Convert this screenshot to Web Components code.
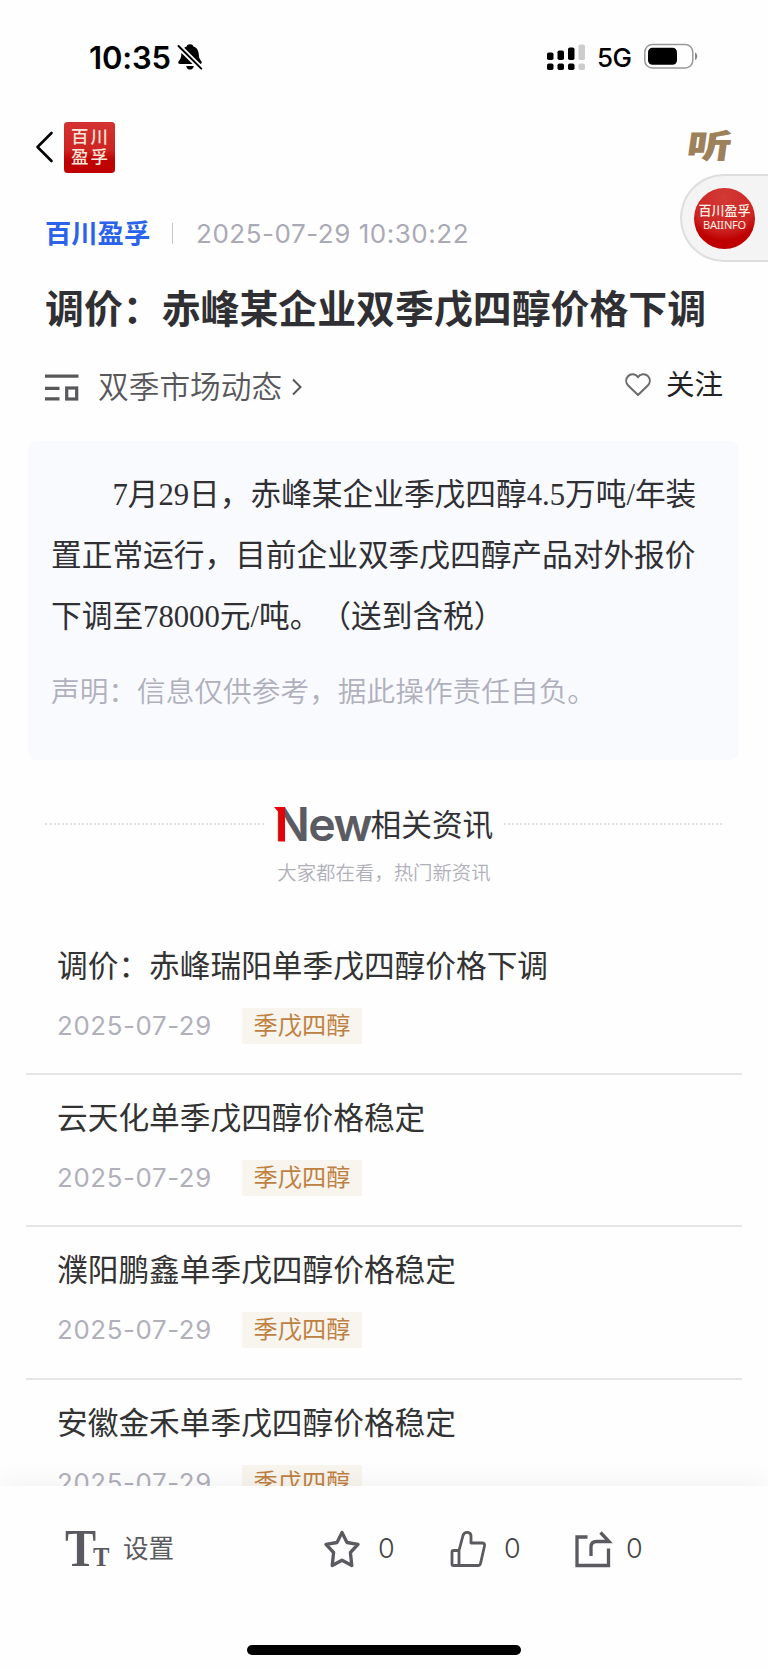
<!DOCTYPE html>
<html lang="zh-CN">
<head>
<meta charset="utf-8">
<title>百川盈孚</title>
<style>
  html, body { margin: 0; padding: 0; }
  body { background: #fefefe; width: 768px; height: 1669px; overflow: hidden;
    font-family: "Noto Sans CJK SC", sans-serif; text-spacing-trim: space-all; color: #333337; }
</style>
</head>
<body>
<app-page></app-page>
<script>
const define = (name, html) => {
  const t = document.createElement('template');
  t.innerHTML = html;
  customElements.define(name, class extends HTMLElement {
    constructor() {
      super();
      this.attachShadow({ mode: 'open' }).appendChild(t.content.cloneNode(true));
    }
  });
};

define('status-bar', `
<style>
  :host { display: flex; align-items: center; height: 114px; box-sizing: border-box; padding: 0 70px 0 89px; color: #000; font-family: Inter, sans-serif; }
  .time { font-size: 31px; font-weight: 600; line-height: 40px; letter-spacing: -.15px; width: 88px; white-space: nowrap; margin-top: 1px; }
  .gap { flex: 1; }
  .net { font-size: 26px; font-weight: 500; line-height: 40px; margin: 2px 12px 0 12px; width: 35px; letter-spacing: -.5px; white-space: nowrap; }
  svg { display: block; flex: none; }
</style>
<span class="time">10:35</span>
<svg width="26" height="28" viewBox="0 0 26 28"><path d="M13 1.200c1.800 0 3 .9 3.400 2.200 3.700 1.200 5.200 4.200 5.400 8.200.2 3.600 1 5 2.400 6.500 1 1 .7 2.900-.7 2.900H2.600c-1.500 0-1.800-1.900-.8-2.900 1.500-1.500 2.300-3 2.500-6.500.2-4 1.700-7 5.400-8.200C10 2.100 11.200 1.200 13 1.200Z"/><path d="M9.200 23h7.600c-.4 2.500-1.900 3.600-3.800 3.600S9.600 25.500 9.200 23Z"/><path d="M0 1.500 25 26.500" stroke="#fefefe" stroke-width="5.500"/><path d="M1.500 3 24.300 25.600" stroke="#000" stroke-width="2" stroke-linecap="round"/></svg>
<span class="gap"></span>
<svg width="39" height="28" viewBox="0 0 39 28"><g><rect x="1" y="9.500" width="6.500" height="7.500" rx="1.800"/><rect x="11.500" y="7.500" width="6.500" height="9.500" rx="1.800"/><rect x="22" y="4.500" width="6.500" height="12.500" rx="1.800"/><rect x="1" y="20.500" width="6.500" height="6.500" rx="1.800"/><rect x="11.500" y="20.500" width="6.500" height="6.500" rx="1.800"/><rect x="22" y="20.500" width="6.500" height="6.500" rx="1.800"/></g><g fill="#cdcdcd"><rect x="32.500" y="1.500" width="6.500" height="15.500" rx="1.800"/><rect x="32.500" y="20.500" width="6.500" height="6.500" rx="1.800"/></g></svg>
<span class="net">5G</span>
<svg width="54" height="28" viewBox="0 0 54 28"><rect x=".8" y="1.500" width="48" height="23.500" rx="7.500" fill="none" stroke="#999" stroke-width="1.500"/><rect x="4" y="4.800" width="29" height="17" rx="4.500"/><path d="M51 9.500c3 1.200 3 6.400 0 7.600Z" fill="#888"/></svg>
`);

define('brand-tile', `
<style>
  :host { display: grid; grid-template-columns: 19.500px 19.500px; grid-template-rows: 20px 20px; place-content: center; justify-items: center; align-items: center; width: 51px; height: 51px; box-sizing: border-box; padding-bottom: 3px; border-radius: 4px; background: linear-gradient(#d43432, #cc2422 55%, #bd0203 75%, #c00000); box-shadow: inset 0 0 1px #b00; color: #fbe6da; font-size: 17.500px; font-weight: 500; line-height: 20px; }
</style>
<span>百</span><span>川</span><span>盈</span><span>孚</span>
`);

define('nav-bar', `
<style>
  :host { display: flex; align-items: center; height: 66px; box-sizing: border-box; padding: 0 35px 0 34px; }
  svg { display: block; margin-right: 9px; }
  .listen { margin-left: auto; margin-top: -6px; font-size: 42px; line-height: 42px; font-weight: 900; color: #9d815a; transform: skewX(-8deg) scale(1.08, .79); width: 45px; text-indent: 1px; }
</style>
<svg width="21" height="34" viewBox="0 0 21 34"><path d="M17.500 3 3.500 17l14 14" fill="none" stroke="#000" stroke-width="2.600" stroke-linecap="round" stroke-linejoin="round"/></svg>
<brand-tile></brand-tile>
<span class="listen">听</span>
`);

define('float-badge', `
<style>
  :host { position: absolute; right: 0; top: 174px; width: 88px; height: 88px; box-sizing: border-box; display: flex; align-items: center; padding-left: 12px; border: 2px solid #dedede; border-right: 0; border-radius: 44px 0 0 44px; background: #f4f4f4; }
  .disc { width: 61px; height: 61px; border-radius: 50%; background: radial-gradient(circle at 50% 15%, #d23a36 0, #cc2423 55%, #be0000 72%); color: #fdeee4; display: flex; flex-direction: column; align-items: center; justify-content: center; white-space: nowrap; box-sizing: border-box; padding-bottom: 4px; }
  .cn { font-size: 13px; font-weight: 500; line-height: 16px; }
  .en { font: 11px/13px "Noto Sans", sans-serif; letter-spacing: -.2px; }
</style>
<div class="disc"><span class="cn">百川盈孚</span><span class="en">BAIINFO</span></div>
`);

define('article-meta', `
<style>
  :host { display: flex; align-items: center; height: 94px; padding-left: 45px; white-space: nowrap; }
  .source { color: #2a62ea; font-size: 26.300px; font-weight: 700; line-height: 40px; margin-top: -4px; width: 127px; }
  .bar { width: 1px; height: 21px; background: #c4c4cc; margin-right: 23px; margin-top: -1px; }
  .time { font: 26px/40px Inter, sans-serif; letter-spacing: .53px; color: #aaaab6; }
</style>
<span class="source"><slot name="source"></slot></span><span class="bar"></span><span class="time"><slot name="time"></slot></span>
`);

define('article-title', `
<style>
  :host { display: block; height: 62px; margin-top: -4px; }
  h1 { margin: 0; padding-left: 45px; font-size: 38.900px; line-height: 58px; font-weight: 700; color: #303034; white-space: nowrap; }
</style>
<h1><slot></slot></h1>
`);

define('channel-row', `
<style>
  :host { display: flex; align-items: center; height: 96px; padding: 0 45px 0 45px; color: #58585b; white-space: nowrap; }
  svg { display: block; flex: none; }
  .name { font-size: 30.700px; line-height: 44px; margin: -4px 9px 0 19px; font-weight: 350; }
  .follow { margin-left: auto; display: flex; align-items: center; gap: 15px; margin-top: -4px; }
  .follow span { font-size: 28.500px; line-height: 40px; color: #222; margin-top: -4px; }
</style>
<svg width="34" height="27" viewBox="0 0 34 27"><g fill="#58585b"><path d="M0 .5h33.500v3.200H0zM0 12.800h14.500V16H0zM0 23.300h14.500v3.200H0z"/></g><rect x="21.700" y="14" width="10" height="11" fill="none" stroke="#58585b" stroke-width="3.200"/></svg>
<span class="name"><slot></slot></span>
<svg width="12" height="20" viewBox="0 0 12 20"><path d="M2 2.500 9.500 10 2 17.500" fill="none" stroke="#58585b" stroke-width="2"/></svg>
<div class="follow"><svg width="26" height="24" viewBox="0 0 26 24"><path d="M13 4.200C11 .8 5.700.3 3 3.200.3 6.200.8 10 3.200 12.500L13 22l9.800-9.500C25.200 10 25.700 6.200 23 3.200 20.300.3 15 .8 13 4.200Z" fill="none" stroke="#6b6b6b" stroke-width="2" stroke-linejoin="round"/></svg><span>关注</span></div>
`);

define('article-card', `
<style>
  :host { display: block; box-sizing: border-box; margin: 6px 29px 0 28px; height: 319px; border-radius: 9px; background: #f9fafe; padding: 24px 0 0 23px; white-space: nowrap; }
  .text { font: 30.700px/61.200px "Liberation Serif", "Noto Sans CJK SC", serif; color: #303034; }
  .note { font-size: 28.700px; line-height: 50px; margin-top: 16px; color: #b0b0bd; font-weight: 350; }
</style>
<div class="text"><slot></slot></div>
<div class="note"><slot name="note"></slot></div>
`);

define('related-heading', `
<style>
  :host { display: block; padding-top: 30px; }
  .row { display: flex; align-items: center; height: 68px; padding: 0 46px 0 45px; }
  i { flex: 1; height: 0; border-top: 2px dotted #e2e2e5; margin-top: -1px; }
  .word { position: relative; margin-left: 10px; width: 97px; font: 600 46.500px/68px Inter, sans-serif; color: #5b5b63; letter-spacing: -1.500px; text-indent: 1px; white-space: nowrap; }
  .word svg { position: absolute; left: 0; top: 17px; }
  .cn { font-size: 30.700px; line-height: 44px; margin-top: -2px; width: 133px; white-space: nowrap; }
  .sub { text-align: center; font-size: 19.400px; line-height: 29px; color: #b0b0bb; font-weight: 350; margin-top: -1px; }
</style>
<div class="row"><i></i><span class="word">New<svg width="12" height="36" viewBox="0 0 12 36"><path d="M0 0h11v34.500H4.500V5Z" fill="#e60008"/></svg></span><span class="cn">相关资讯</span><i></i></div>
<div class="sub">大家都在看，热门新资讯</div>
`);

define('news-item', `
<style>
  :host { display: block; box-sizing: border-box; height: 152.200px; margin: 0 26px; padding: 19px 0 0 31px; border-bottom: 2px solid #e6e6e8; white-space: nowrap; }
  .title { font-size: 30.700px; line-height: 44px; color: #333; }
  .meta { display: flex; align-items: center; height: 36px; margin-top: 22px; }
  .date { font: 25.800px/36px Inter, sans-serif; letter-spacing: .65px; color: #b0b0bb; width: 185px; }
  .tag { background: #f8f4ee; color: #bf8142; font-size: 24.200px; line-height: 32px; height: 36px; width: 120px; text-align: center; }
</style>
<div class="title"><slot></slot></div>
<div class="meta"><span class="date"><slot name="date"></slot></span><span class="tag"><slot name="tag"></slot></span></div>
`);

define('tool-bar', `
<style>
  :host { position: relative; display: flex; flex-direction: column; height: 183px; background: #fefefe; box-shadow: 0 -4px 26px rgba(0,0,0,.05); color: #5a5a60; }
  .row { display: flex; align-items: center; height: 125px; padding-left: 65px; }
  .tt { display: flex; align-items: baseline; font-family: "Liberation Serif", serif; font-weight: 700; width: 58px; line-height: 60px; white-space: nowrap; margin-top: 7px; }
  .big { font-size: 53px; width: 27px; letter-spacing: -5px; transform: scaleX(.88); transform-origin: 0 0; }
  .small { font-size: 28px; width: 20px; transform: scaleX(.88); transform-origin: 0 0; margin-left: 1px; }
  .set { font-size: 25.600px; line-height: 40px; width: 201px; margin-top: -4px; }
  .n { font: 300 27px/40px Inter, sans-serif; color: #444; }
  svg { display: block; flex: none; fill: none; stroke: #5a5a60; stroke-width: 3.300; }
  .home { width: 274px; height: 10px; border-radius: 5px; background: #000; margin: 34px auto 0 247px; }
</style>
<div class="row">
  <span class="tt"><span class="big">T</span><span class="small">T</span></span><span class="set">设置</span>
  <svg width="36" height="38" viewBox="0 0 36 38" stroke-linejoin="round"><path d="m18 2.500 5 10 11 1.900-7.600 8.100 1.400 13L18 30.200 8.200 35.500l1.400-13L2 14.400l11-1.900Z"/></svg>
  <span class="n" style="margin-left:18px;width:72px">0</span>
  <svg width="36" height="38" viewBox="0 0 36 38" stroke-linejoin="round" style="stroke-width:2.800"><path d="M9 20.500H3.500Q2 20.500 2 22v12q0 1.500 1.500 1.500H9ZM9 20.500 13 5.500C14.500 1 21 1.500 21 6v7h11q3 0 2.500 3L30.500 33.500q-.5 2-2.500 2H9"/></svg>
  <span class="n" style="margin-left:18px;width:71px">0</span>
  <svg width="38" height="38" viewBox="0 0 38 38"><path d="M12.500 7H2v28.500h31.500V18.500"/><path d="M16 26v-9q0-5.500 5.500-5.500H34L25.500 2.500"/></svg>
  <span class="n" style="margin-left:13px">0</span>
</div>
<div class="home"></div>
`);

define('app-page', `
<style>
  :host { position: relative; display: flex; flex-direction: column; width: 768px; height: 1669px; overflow: hidden; }
  .list { flex: 1; min-height: 0; overflow: hidden; margin-top: 37px; }
  p { margin: 0; }
  p.first { text-indent: 2em; }
  status-bar, nav-bar, article-meta, article-title, channel-row, article-card, related-heading, tool-bar { flex: none; }
</style>
<status-bar></status-bar>
<nav-bar></nav-bar>
<article-meta style="margin-top:7px"><span slot="source">百川盈孚</span><span slot="time">2025-07-29 10:30:22</span></article-meta>
<article-title>调价：赤峰某企业双季戊四醇价格下调</article-title>
<channel-row>双季市场动态</channel-row>
<article-card><p class="first">7月29日，赤峰某企业季戊四醇4.5万吨/年装</p><p>置正常运行，目前企业双季戊四醇产品对外报价</p><p>下调至78000元/吨。（送到含税）</p><span slot="note">声明：信息仅供参考，据此操作责任自负。</span></article-card>
<related-heading></related-heading>
<div class="list">
  <news-item>调价：赤峰瑞阳单季戊四醇价格下调<span slot="date">2025-07-29</span><span slot="tag">季戊四醇</span></news-item>
  <news-item>云天化单季戊四醇价格稳定<span slot="date">2025-07-29</span><span slot="tag">季戊四醇</span></news-item>
  <news-item>濮阳鹏鑫单季戊四醇价格稳定<span slot="date">2025-07-29</span><span slot="tag">季戊四醇</span></news-item>
  <news-item>安徽金禾单季戊四醇价格稳定<span slot="date">2025-07-29</span><span slot="tag">季戊四醇</span></news-item>
</div>
<tool-bar></tool-bar>
<float-badge></float-badge>
`);
</script>
</body>
</html>
